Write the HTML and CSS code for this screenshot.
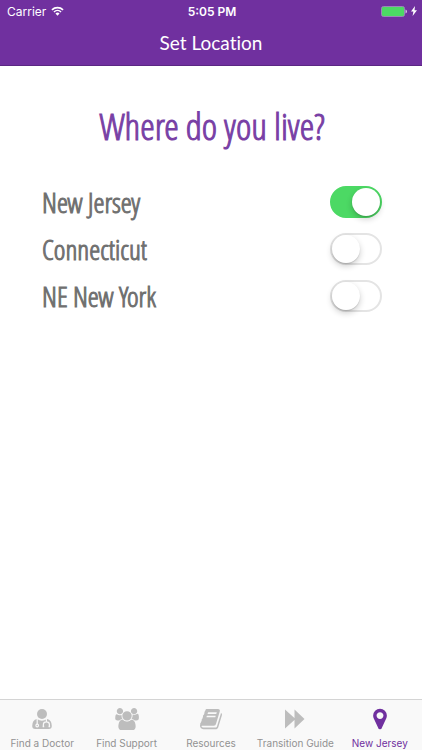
FILE: index.html
```html
<!DOCTYPE html>
<html lang="en">
<head>
<meta charset="utf-8">
<meta name="viewport" content="width=device-width, initial-scale=1">
<title>Set Location</title>
<link rel="stylesheet" href="styles.css">
</head>
<body>
<header class="header">
  <div class="status">
    <div class="carrier">Carrier
      <svg class="wifi" viewBox="0 0 14 10" aria-hidden="true"><g fill="none" stroke="currentColor" stroke-width="1.7"><path d="M1 3.8a8.6 8.6 0 0 1 12 0"/><path d="M3.2 6.1a5.4 5.4 0 0 1 7.6 0"/></g><path fill="currentColor" d="M4.8 7.6a3.2 3.2 0 0 1 4.4 0L7 10z"/></svg>
    </div>
    <div class="time">5:05 PM</div>
    <div class="power">
      <svg class="battery" viewBox="0 0 26 11" aria-hidden="true"><rect x=".5" y=".5" width="23" height="10" rx="2" fill="#4cd964" stroke="#9b86b8"/><path fill="#d6c5e5" d="M24.5 3.5q1.5.4 1.5 2t-1.5 2z"/></svg>
      <svg class="bolt" viewBox="0 0 6 10" aria-hidden="true"><path fill="currentColor" d="M4 0 0 5.5h2.4L1.6 10 6 4.2H3.5z"/></svg>
    </div>
  </div>
  <h1 class="title">Set Location</h1>
</header>
<main class="main">
  <h2 class="question">Where do you live?</h2>
  <div class="options">
    <label class="option">New Jersey<input class="switch" type="checkbox" role="switch" checked></label>
    <label class="option">Connecticut<input class="switch" type="checkbox" role="switch"></label>
    <label class="option">NE New York<input class="switch" type="checkbox" role="switch"></label>
  </div>
</main>
<nav class="tabs">
  <a class="tab" href="#doctor">
    <svg class="icon" viewBox="0 0 20 22" aria-hidden="true"><circle cx="10" cy="6" r="5" fill="currentColor"/><path fill="currentColor" d="M5 11q5 3.600 10 0 4.800 1 4.800 7 0 3-3 3H3.200q-3 0-3-3Q.2 12 5 11z"/><g fill="none" stroke="#f9f9f9" stroke-width="1.200"><path d="M5.200 11v5.200"/><circle cx="5.200" cy="17.500" r="1.300"/><path d="M14.400 11v3M11.400 18.500v-2q0-2.600 3-2.600t3 2.600v2"/></g><path fill="#f9f9f9" d="M10.700 17.700h1.500v1.500h-1.500zM16.600 17.700h1.500v1.500h-1.500z"/></svg>
    Find a Doctor</a>
  <a class="tab" href="#support">
    <svg class="icon" viewBox="0 0 1920 1792" aria-hidden="true"><path fill="currentColor" d="M593 896q-162 5-265 128h-134q-82 0-138-40.500t-56-118.500q0-353 124-353 6 0 43.500 21t97.500 42.500 119 21.500q67 0 133-23-5 37-5 66 0 159 93 293zm1071 637q0 120-73 189.500t-194 69.500h-874q-121 0-194-69.500t-73-189.500q0-53 3.500-103.500t14-109 26.500-108.500 43-97.500 62-81 85.500-53.500 111.500-20q10 0 43 21.500t73 48 107 48 135 21.500 135-21.500 107-48 73-48 43-21.500q61 0 111.500 20t85.500 53.500 62 81 43 97.500 26.500 108.500 14 109 3.500 103.500zm-1024-1277q0 106-75 181t-181 75-181-75-75-181 75-181 181-75 181 75 75 181zm704 384q0 159-112.500 271.500t-271.500 112.500-271.500-112.500-112.500-271.500 112.500-271.500 271.500-112.500 271.500 112.500 112.500 271.500zm576 225q0 78-56 118.500t-138 40.500h-134q-103-123-265-128 93-134 93-293 0-29-5-66 66 23 133 23 59 0 119-21.500t97.500-42.500 43.500-21q124 0 124 353zm-128-609q0 106-75 181t-181 75-181-75-75-181 75-181 181-75 181 75 75 181z"/></svg>
    Find Support</a>
  <a class="tab" href="#resources">
    <svg class="icon" viewBox="0 60 1664 1664" aria-hidden="true"><path fill="currentColor" d="M1639 478q40 57 18 129l-275 906q-19 64-76.500 107.500t-122.500 43.500h-923q-77 0-148.500-53.500t-99.500-131.500q-24-67-2-127 0-4 3-27t4-37q1-8-3-21.500t-3-19.500q2-11 8-21t16.500-23.500 16.500-23.500q23-38 45-91.500t30-91.500q3-10 .5-30t-.5-28q3-11 17-28t17-23q21-36 42-92t25-90q1-9-2.500-32t.5-28q4-13 22-30.500t22-22.500q19-26 42.500-84.500t27.500-96.500q1-8-3-25.500t-2-26.500q2-8 9-18t18-23 17-21q8-12 16.500-30.500t15-35 16-36 19.500-32 26.500-23.500 36-11.500 47.500 5.500l-1 3q38-9 51-9h761q74 0 114 56t18 130l-274 906q-36 119-71.500 153.500t-128.500 34.500h-869q-27 0-38 15-11 16-1 43 24 70 144 70h923q29 0 56-15.500t35-41.500l300-987q7-22 5-57 38 15 59 43zm-1064 2q-4 13 2 22.500t20 9.500h608q13 0 25.500-9.500t16.500-22.500l21-64q4-13-2-22.500t-20-9.500h-608q-13 0-25.500 9.500t-16.500 22.500zm-83 256q-4 13 2 22.500t20 9.500h608q13 0 25.500-9.500t16.500-22.500l21-64q4-13-2-22.500t-20-9.500h-608q-13 0-25.500 9.500t-16.500 22.500z"/></svg>
    Resources</a>
  <a class="tab" href="#guide">
    <svg class="icon" viewBox="0 0 24 22" aria-hidden="true"><path fill="currentColor" d="M2 1.500 12.500 11 2 20.500zM11.500 1.500 21.500 11l-10 9.500z"/></svg>
    Transition Guide</a>
  <a class="tab tab-active" href="#location" aria-current="page">
    <svg class="icon" viewBox="0 330 1024 1640" aria-hidden="true"><path fill="currentColor" fill-rule="evenodd" d="M768 896q0-106-75-181t-181-75-181 75-75 181 75 181 181 75 181-75 75-181zm256 0q0 109-33 179l-364 774q-16 33-47.500 52t-67.500 19-67.500-19-46.500-52l-365-774q-33-70-33-179 0-212 150-362t362-150 362 150 150 362z"/></svg>
    New Jersey</a>
</nav>
</body>
</html>
```
FILE: styles.css
```css
* {
  box-sizing: border-box;
}

body {
  display: flex;
  flex-direction: column;
  min-height: 100vh;
  margin: 0;
  background: #fff;
  font-family: Inter, "Liberation Sans", sans-serif;
}

.header {
  padding-bottom: 7px;
  border-bottom: 1px solid #5b2783;
  background: #70309f;
  color: #fff;
}

.status {
  display: grid;
  grid-template-columns: 1fr auto 1fr;
  align-items: center;
  height: 22px;
  padding: 0 5px 0 7px;
}

.carrier,
.power {
  display: flex;
  align-items: center;
  gap: 5px;
}

.carrier {
  font-size: 12px;
}

.time {
  font-size: 12px;
  font-weight: 600;
}

.power {
  justify-content: flex-end;
  gap: 4px;
}

.wifi {
  width: 13px;
  height: 10px;
}

.battery {
  width: 26px;
  height: 11px;
}

.bolt {
  width: 6px;
  height: 10px;
}

.title {
  margin: 0;
  padding-top: 6px;
  font: 400 19px/30px Lato, sans-serif;
  font-variant-ligatures: none;
  text-align: center;
}

.main {
  flex: 1;
  padding: 36px 40px 0 42px;
}

.question {
  margin: 0 0 28px;
  color: #783fa5;
  font: 400 37px/48px "Open Sans Condensed Light", Lato, sans-serif;
  -webkit-text-stroke: 1px currentColor;
  text-align: center;
}

.option {
  display: flex;
  align-items: center;
  justify-content: space-between;
  height: 47px;
  color: #707070;
  font: 400 28px/32px "Open Sans Condensed Light", Lato, sans-serif;
  -webkit-text-stroke: 1px currentColor;
}

.switch {
  appearance: none;
  display: flex;
  width: 52px;
  height: 32px;
  margin: 0;
  padding: 1px;
  border: 2px solid #e4e4e4;
  border-radius: 16px;
  background: #fff;
}

.switch::before {
  content: "";
  width: 28px;
  height: 28px;
  margin: -1px;
  border-radius: 50%;
  background: #fff;
  box-shadow: 0 3px 6px rgba(0, 0, 0, 0.2), 0 1px 1px rgba(0, 0, 0, 0.12);
}

.switch:checked {
  justify-content: flex-end;
  border-color: #4cd964;
  background: #4cd964;
}

.tabs {
  display: grid;
  grid-template-columns: repeat(5, 1fr);
  height: 51px;
  border-top: 1px solid #d4d4d4;
  background: #f9f9f9;
}

.tab {
  display: flex;
  flex-direction: column;
  align-items: center;
  gap: 5px;
  padding-top: 8px;
  color: #929292;
  font-size: 10px;
  line-height: 16px;
  text-decoration: none;
  white-space: nowrap;
}

.icon {
  width: 24px;
  height: 22px;
  color: #bdbdbd;
}

.tab-active,
.tab-active .icon {
  color: #70309f;
}
```
